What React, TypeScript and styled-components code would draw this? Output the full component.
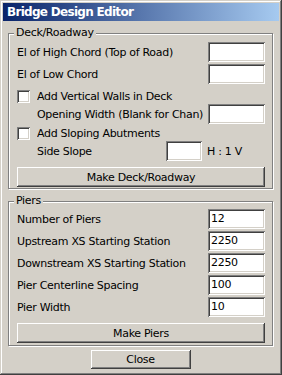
import styled, { createGlobalStyle } from "styled-components"

const GlobalStyle = createGlobalStyle`
  html, body {
    margin: 0;
    padding: 0;
    background: #d4d0c8;
  }
  body {
    font-family: "DejaVu Sans", "Liberation Sans", sans-serif;
    font-size: 11px;
    letter-spacing: -0.3px;
    color: #000;
  }
`

const raised = `
  box-shadow: inset -1px -1px #404040, inset 1px 1px #ffffff,
    inset -2px -2px #808080, inset 2px 2px #d4d0c8;
`

const sunken = `
  box-shadow: inset 1px 1px #808080, inset -1px -1px #ffffff,
    inset 2px 2px #404040, inset -2px -2px #d4d0c8;
`

const Window = styled.div`
  box-sizing: border-box;
  width: 282px;
  height: 375px;
  padding: 3px;
  background: #d4d0c8;
  box-shadow: inset -1px -1px #404040, inset 1px 1px #d4d0c8,
    inset -2px -2px #808080, inset 2px 2px #ffffff;
  display: flex;
  flex-direction: column;
`

const TitleBar = styled.div`
  height: 18px;
  display: flex;
  align-items: center;
  padding-left: 4px;
  background: linear-gradient(to right, #0a246a, #a6caf0);
  color: #fff;
  font-weight: bold;
  font-size: 12px;
  letter-spacing: -0.7px;
`

const Body = styled.div`
  display: flex;
  flex-direction: column;
  padding: 5px 6px 0 5px;
`

const GroupBox = styled.fieldset<{ $gap?: number; $padTop?: number; $padBottom?: number }>`
  margin: ${(p) => p.$gap ?? 0}px 0 0 0;
  padding: ${(p) => p.$padTop ?? 1}px 7px ${(p) => p.$padBottom ?? 1}px 8px;
  min-width: 0;
  border: 1px solid #808080;
  box-shadow: inset 1px 1px #fff, 1px 1px #fff;
  display: flex;
  flex-direction: column;
`

const Legend = styled.legend`
  margin-left: -3px;
  padding: 0 2px;
  line-height: 14px;
  background: #d4d0c8;
`

const Row = styled.div<{ $h?: number; $indent?: boolean; $top?: number }>`
  height: ${(p) => p.$h ?? 22}px;
  margin-top: ${(p) => p.$top ?? 0}px;
  padding-left: ${(p) => (p.$indent ? 20 : 0)}px;
  display: flex;
  align-items: center;
  white-space: nowrap;
`

const Label = styled.span`
  flex: 1;
  overflow: hidden;
`

const TextBox = styled.div<{ $w?: number }>`
  box-sizing: border-box;
  width: ${(p) => p.$w ?? 57}px;
  height: 20px;
  padding: 3px 3px 0 3px;
  background: #fff;
  line-height: 14px;
  ${sunken}
`

const CheckBox = styled.span`
  box-sizing: border-box;
  width: 13px;
  height: 13px;
  margin-right: 7px;
  background: #fff;
  ${sunken}
`

const Unit = styled.span`
  width: 58px;
  margin-left: 5px;
`

const Button = styled.div<{ $w?: number; $h?: number; $top?: number }>`
  box-sizing: border-box;
  width: ${(p) => (p.$w ? `${p.$w}px` : "auto")};
  height: ${(p) => p.$h ?? 20}px;
  margin-top: ${(p) => p.$top ?? 0}px;
  align-self: ${(p) => (p.$w ? "center" : "stretch")};
  display: flex;
  align-items: center;
  justify-content: center;
  background: #d4d0c8;
  ${raised}
`

const piers = [
  { label: "Number of Piers", value: "12" },
  { label: "Upstream XS Starting Station", value: "2250" },
  { label: "Downstream XS Starting Station", value: "2250" },
  { label: "Pier Centerline Spacing", value: "100" },
  { label: "Pier Width", value: "10" },
]

export default function App() {
  return (
    <>
      <GlobalStyle />
      <Window>
        <TitleBar>Bridge Design Editor</TitleBar>
        <Body>
          <GroupBox>
            <Legend>Deck/Roadway</Legend>
            <Row>
              <Label>El of High Chord (Top of Road)</Label>
              <TextBox />
            </Row>
            <Row>
              <Label>El of Low Chord</Label>
              <TextBox />
            </Row>
            <Row $h={16} $top={3}>
              <CheckBox />
              <Label>Add Vertical Walls in Deck</Label>
            </Row>
            <Row $h={20} $indent>
              <Label>Opening Width (Blank for Chan)</Label>
              <TextBox />
            </Row>
            <Row $h={16} $top={1}>
              <CheckBox />
              <Label>Add Sloping Abutments</Label>
            </Row>
            <Row $h={20} $indent>
              <Label>Side Slope</Label>
              <TextBox $w={36} />
              <Unit>H : 1 V</Unit>
            </Row>
            <Button $top={6}>Make Deck/Roadway</Button>
          </GroupBox>
          <GroupBox $gap={5} $padTop={0} $padBottom={2}>
            <Legend>Piers</Legend>
            {piers.map((p) => (
              <Row key={p.label}>
                <Label>{p.label}</Label>
                <TextBox>{p.value}</TextBox>
              </Row>
            ))}
            <Button $top={5}>Make Piers</Button>
          </GroupBox>
          <Button $w={100} $h={19} $top={4}>
            Close
          </Button>
        </Body>
      </Window>
    </>
  )
}
